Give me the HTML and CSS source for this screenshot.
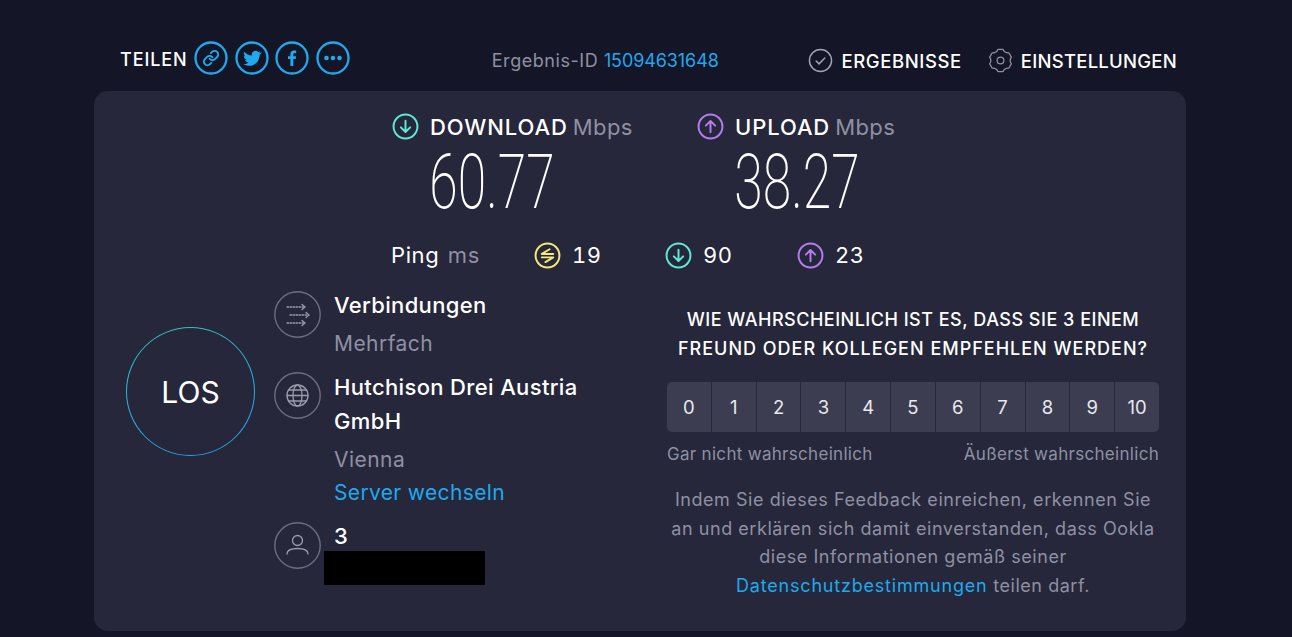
FILE: index.html
```html
<!DOCTYPE html>
<html lang="de">
<head>
<meta charset="utf-8">
<title>Speedtest</title>
<link rel="stylesheet" href="styles.css">
</head>
<body>
<header class="topbar">
  <div class="share">
    <span class="share-label">TEILEN</span>
    <span class="share-icon"><svg viewBox="0 0 34 34"><circle cx="17" cy="17" r="15.5" class="ring"/><g transform="translate(8.400 8.400) scale(.72)"><path class="blue-link" d="M10 13a5 5 0 0 0 7.540.540l3-3a5 5 0 0 0-7.070-7.070l-1.720 1.710"/><path class="blue-link" d="M14 11a5 5 0 0 0-7.540-.540l-3 3a5 5 0 0 0 7.070 7.070l1.710-1.710"/></g></svg></span>
    <span class="share-icon"><svg viewBox="0 0 34 34"><circle cx="17" cy="17" r="15.5" class="ring"/><path class="blue-fill" d="M26 11.600c-.7.3-1.400.5-2.100.6.8-.5 1.300-1.200 1.600-2-.7.400-1.500.7-2.300.9a3.700 3.700 0 0 0-6.300 3.400c-3-.1-5.700-1.600-7.500-3.800-1 1.700-.5 3.800 1.100 4.900-.6 0-1.200-.2-1.700-.5 0 1.800 1.300 3.300 3 3.700-.5.100-1.100.2-1.700.1.500 1.500 1.900 2.500 3.500 2.600-1.600 1.200-3.500 1.800-5.500 1.600 6.800 4.300 16.200.6 16.600-9.300.7-.6 1.600-1.300 2.200-2.200z"/></svg></span>
    <span class="share-icon"><svg viewBox="0 0 34 34"><circle cx="17" cy="17" r="15.5" class="ring"/><path class="blue-fill" d="M18.300 25v-7h2.400l.4-2.800h-2.800v-1.700c0-.8.300-1.300 1.400-1.300h1.500V9.700c-.3 0-1.200-.1-2.200-.1-2.200 0-3.600 1.300-3.600 3.700v1.900H13V18h2.400v7z"/></svg></span>
    <span class="share-icon"><svg viewBox="0 0 34 34"><circle cx="17" cy="17" r="15.5" class="ring"/><circle cx="10.500" cy="17" r="2.300" class="blue-fill"/><circle cx="17" cy="17" r="2.300" class="blue-fill"/><circle cx="23.500" cy="17" r="2.300" class="blue-fill"/></svg></span>
  </div>
  <div class="result-id">Ergebnis-ID <a class="link result-num">15094631648</a></div>
  <nav class="nav">
    <span class="nav-item item-results"><svg class="nav-icon" viewBox="0 0 26 26"><circle cx="13" cy="13" r="11.500"/><path d="M8.500 13.500l3 3 6-6"/></svg>ERGEBNISSE</span>
    <span class="nav-item item-settings"><svg class="nav-icon gear" viewBox="0 0 26 26"><circle cx="13" cy="13" r="3.500"/><path stroke-linejoin="round" d="M10.350 1.500L15.650 1.500Q17.400 5.380 21.630 4.950L24.280 9.550Q21.800 13 24.280 16.450L21.630 21.050Q17.400 20.620 15.650 24.500L10.350 24.500Q8.600 20.620 4.370 21.050L1.720 16.450Q4.200 13 1.720 9.550L4.370 4.950Q8.600 5.380 10.350 1.500Z"/></svg>EINSTELLUNGEN</span>
  </nav>
</header>
<main class="card">
  <section class="speeds">
    <div class="speed speed-down">
      <div class="speed-head">
        <svg class="gauge gauge-teal" viewBox="0 0 26 26"><circle cx="13" cy="13" r="11.500"/><path d="M13 7.500v10.500M8.500 13.800l4.500 4.500 4.500-4.500"/></svg>
        <span class="speed-name">DOWNLOAD</span> <span class="unit">Mbps</span>
      </div>
      <div class="speed-value">60.77</div>
    </div>
    <div class="speed speed-up">
      <div class="speed-head">
        <svg class="gauge gauge-purple" viewBox="0 0 26 26"><circle cx="13" cy="13" r="11.500"/><path d="M13 18.500V8M8.500 12.200L13 7.700l4.500 4.500"/></svg>
        <span class="speed-name">UPLOAD</span> <span class="unit">Mbps</span>
      </div>
      <div class="speed-value">38.27</div>
    </div>
  </section>
  <section class="ping">
    <div class="ping-label">Ping <span class="ping-unit">ms</span></div>
    <div class="ping-item ping-a"><svg class="gauge gauge-yellow" viewBox="0 0 26 26"><circle cx="13" cy="13" r="11.500"/><path d="M15 7L7.500 11.500H18.500M7.500 14.800H18.500L11 19.300"/></svg>19</div>
    <div class="ping-item ping-b"><svg class="gauge gauge-teal" viewBox="0 0 26 26"><circle cx="13" cy="13" r="11.500"/><path d="M13 7.500v10.500M8.500 13.800l4.500 4.500 4.500-4.500"/></svg>90</div>
    <div class="ping-item ping-c"><svg class="gauge gauge-purple" viewBox="0 0 26 26"><circle cx="13" cy="13" r="11.500"/><path d="M13 18.500V8M8.500 12.200L13 7.700l4.500 4.500"/></svg>23</div>
  </section>
  <section class="lower">
    <div class="go-wrap">
      <div class="go"><span>LOS</span></div>
    </div>
    <div class="info">
      <div class="info-row row-conn">
        <svg class="info-icon" viewBox="0 0 47 47"><circle cx="23.500" cy="23.500" r="22.700"/><path class="thin" stroke-dasharray="1.500 1.500" d="M13 16h17M16 24h18M13 32h17"/><path class="thin" d="M28 13.500l3 2.500-3 2.500M32 21.500l3 2.500-3 2.500M28 29.500l3 2.500-3 2.500"/></svg>
        <div class="info-text">
          <div class="info-title">Verbindungen</div>
          <div class="info-sub">Mehrfach</div>
        </div>
      </div>
      <div class="info-row row-isp">
        <svg class="info-icon" viewBox="0 0 47 47"><circle cx="23.500" cy="23.500" r="22.700"/><g class="thin"><circle cx="23.500" cy="23.500" r="10.500"/><ellipse cx="23.500" cy="23.500" rx="4.500" ry="10.500"/><path d="M13 23.500h21M14.500 18h18M14.500 29h18"/></g></svg>
        <div class="info-text">
          <div class="info-title">Hutchison Drei Austria GmbH</div>
          <div class="info-sub">Vienna</div>
          <a class="link server-link">Server wechseln</a>
        </div>
      </div>
      <div class="info-row row-host">
        <svg class="info-icon" viewBox="0 0 47 47"><circle cx="23.500" cy="23.500" r="22.700"/><g class="thin"><circle cx="23.500" cy="18.500" r="5"/><path d="M13 32c0-4 4.500-5.500 10.500-5.500S34 28 34 32"/></g></svg>
        <div class="info-text">
          <div class="info-title">3</div>
          <div class="redacted"></div>
        </div>
      </div>
    </div>
    <div class="survey">
      <h2 class="survey-q">WIE WAHRSCHEINLICH IST ES, DASS SIE 3 EINEM<br><span class="survey-q2">FREUND ODER KOLLEGEN EMPFEHLEN WERDEN?</span></h2>
      <div class="scale">
        <span>0</span><span>1</span><span>2</span><span>3</span><span>4</span><span>5</span><span>6</span><span>7</span><span>8</span><span>9</span><span>10</span>
      </div>
      <div class="scale-labels"><span>Gar nicht wahrscheinlich</span><span>Äußerst wahrscheinlich</span></div>
      <p class="legal">Indem Sie dieses Feedback einreichen, erkennen Sie an und erklären sich damit einverstanden, dass Ookla diese Informationen gemäß seiner <a class="link legal-link">Datenschutzbestimmungen</a> teilen darf.</p>
    </div>
  </section>
</main>
</body>
</html>
```
FILE: styles.css
```css
* { box-sizing: border-box; }
html, body { height: 100%; }
body {
  margin: 0;
  height: 637px;
  overflow: hidden;
  background: #141526;
  color: #fff;
  font-family: "Inter", "Open Sans", sans-serif;
}
.link { color: #1fa9ee; }
.topbar {
  height: 91px;
  padding: 24px 115px 0 120px;
  display: flex;
  align-items: center;
}
.share { display: flex; align-items: center; flex: none; }
.share-label { font-size: 18px; font-weight: 500; letter-spacing: .9px; width: 74px; padding-top: 3px; flex: none; }
.share-icon { width: 34px; height: 34px; margin-right: 6.700px; flex: none; }
.share-icon svg { display: block; width: 34px; height: 34px; }
.ring { fill: none; stroke: #1fa9ee; stroke-width: 2.300; }
.blue-fill { fill: #1fa9ee; }
.blue-link { fill: none; stroke: #1fa9ee; stroke-width: 2.600; stroke-linecap: round; stroke-linejoin: round; }
.result-id { margin-left: 135px; padding-top: 5px; font-size: 18px; color: #8f90a3; letter-spacing: .55px; }
.result-num { letter-spacing: -.1px; }
.nav { margin-left: auto; display: flex; gap: 26px; padding-top: 6px; }
.nav-item { display: flex; align-items: center; font-size: 18.500px; font-weight: 500; }
.item-results { gap: 8px; letter-spacing: .6px; }
.item-settings { gap: 8px; letter-spacing: .25px; }
.nav-icon { width: 25px; height: 25px; fill: none; stroke: #a3a3b3; stroke-width: 1.500; stroke-linecap: round; }
.gear { stroke: #8f90a3; stroke-width: 1.300; }
.card {
  margin: 0 106px 0 94px;
  height: 540px;
  background: #26273a;
  border-radius: 14px;
  padding-top: 22px;
}
.speeds { display: flex; padding-left: 298px; gap: 65px; }
.speed-down { width: 240px; }
.speed-head { display: flex; align-items: center; font-size: 22px; height: 27px; white-space: pre; }
.gauge { width: 27px; height: 27px; fill: none; stroke-width: 1.900; stroke-linecap: round; stroke-linejoin: round; flex: none; }
.gauge-teal { stroke: #5ee8d8; }
.gauge-purple { stroke: #b57cf0; }
.gauge-yellow { stroke: #f5e97a; }
.speed-head .gauge { margin-right: 11px; }
.speed-name { font-weight: 500; letter-spacing: .9px; }
.unit { color: #8f90a3; margin-left: 5px; letter-spacing: .4px; }
.speed-value {
  font-family: "Roboto", sans-serif;
  font-weight: 200;
  font-size: 76px;
  line-height: 72px;
  margin: 6px 0 0 -.5px;
  transform: scaleX(.68);
  transform-origin: 50% 50%;
  width: 200px;
  text-align: center;
}
.speed-up .speed-value { margin-left: 0; }
.ping { display: flex; align-items: center; padding-left: 297px; margin-top: 22px; font-size: 22px; height: 30px; letter-spacing: .6px; font-variant-numeric: tabular-nums; }
.ping-label { width: 143px; font-weight: 400; }
.ping-unit { color: #8f90a3; margin-left: 2px; }
.ping-item { display: flex; align-items: center; gap: 11px; }
.ping-a { width: 131px; }
.ping-b { width: 132px; }
.lower { display: flex; margin-top: 19px; }
.go-wrap { width: 180px; padding: 38px 0 0 32px; }
.go {
  width: 129px;
  height: 129px;
  border-radius: 50%;
  background: linear-gradient(#26273a, #26273a) padding-box, linear-gradient(160deg, #35c8b8, #1fa9ee 75%) border-box;
  border: 1.500px solid transparent;
  display: flex;
  align-items: center;
  justify-content: center;
  font-size: 30px;
}
.info { width: 393px; display: flex; flex-direction: column; }
.info-row { display: flex; gap: 13px; }
.info-icon { width: 47px; height: 47px; flex: none; fill: none; stroke: #6c6d80; stroke-width: 1.400; margin-top: 2px; }
.row-isp .info-icon { margin-top: 1px; }
.thin { fill: none; stroke: #9a9bad; stroke-width: 1.300; stroke-linecap: round; }
.info-text { width: 250px; }
.info-title { font-size: 22px; font-weight: 500; line-height: 34px; letter-spacing: .35px; margin-top: -1px; }
.info-sub { font-size: 21px; line-height: 34px; color: #8f90a3; margin-top: 5px; letter-spacing: .45px; }
.server-link { display: block; font-size: 21px; line-height: 32px; letter-spacing: .35px; }
.row-conn { height: 82px; }
.row-isp { height: 142px; }
.row-host { margin-top: 7px; }
.redacted { width: 161px; height: 34px; background: #000; margin-left: -10px; margin-top: -2px; }
.survey { width: 492px; text-align: center; }
.survey-q { margin: 16px 0 0; font-size: 18px; font-weight: 500; line-height: 29px; letter-spacing: .5px; white-space: nowrap; }
.survey-q2 { letter-spacing: 1px; }
.scale { display: flex; gap: 1px; margin-top: 19px; height: 50px; border-radius: 5px; overflow: hidden; }
.scale span { flex: 1; display: flex; align-items: center; justify-content: center; background: #3c3d50; font-size: 18.500px; color: #e8e8ee; }
.scale-labels { display: flex; justify-content: space-between; margin-top: 12px; font-size: 17px; color: #8f90a3; letter-spacing: .3px; }
.legal { margin: 22px 0 0; font-size: 18px; line-height: 28.700px; color: #8f90a3; letter-spacing: .55px; }
.legal-link { letter-spacing: .8px; }
```
